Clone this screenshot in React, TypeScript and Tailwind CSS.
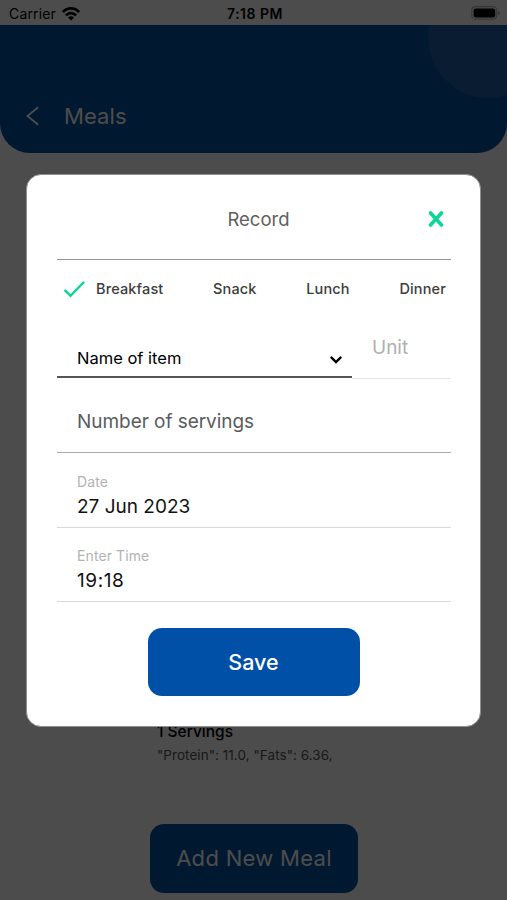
import type { ReactNode } from 'react';

const StatusBar = () => (
  <div className="grid h-[25px] grid-cols-3 items-center pt-[3px] pr-[6px] pl-[9px] text-[14px] leading-none text-black">
    <div className="flex items-center gap-[6px] tracking-[0.15px]">
      <span>Carrier</span>
      <svg className="mb-[1px]" width="18" height="14" viewBox="0 0 18 14" fill="none" stroke="currentColor" strokeWidth="2.8">
        <path d="M0.9 5.1 C5.4 0.2 12.6 0.2 17.1 5.1" />
        <path d="M3.9 8.4 C6.9 5.3 11.1 5.3 14.1 8.4" />
        <path d="M9 13.4 L6 10.5 C7.7 8.9 10.3 8.9 12 10.5 Z" fill="currentColor" stroke="none" />
      </svg>
    </div>
    <div className="text-center text-[14px] font-semibold tracking-[0.5px]">7:18 PM</div>
    <svg className="mb-[2px] justify-self-end" width="30" height="14" viewBox="0 0 30 14">
      <rect x="0.8" y="0.6" width="25" height="12.6" rx="3.6" fill="none" stroke="#000" strokeOpacity="0.3" strokeWidth="1.2" />
      <rect x="2.6" y="2.4" width="21.6" height="9" rx="2" />
      <path d="M27.3 5 C29.3 5.6 29.3 8.2 27.3 8.8 Z" opacity="0.45" />
    </svg>
  </div>
);

const Header = () => (
  <header className="relative flex h-[127.5px] items-end overflow-hidden rounded-b-[30px] bg-[#0050a0] pb-[23px] pl-[26px] text-white">
    <div className="absolute -top-[48px] left-[428px] h-[121px] w-[121px] rounded-full bg-[#ffd8c8]/12" />
    <svg className="mb-[4px]" width="13" height="20" viewBox="0 0 13 20" fill="none" stroke="currentColor" strokeWidth="1.9">
      <path d="M12.2 1.3 L1.4 10 L12.2 18.7" />
    </svg>
    <h1 className="ml-[25px] text-[22px] leading-[28px] tracking-[0.1px]">Meals</h1>
  </header>
);

const MealsPage = () => (
  <div className="flex h-[900px] flex-col bg-white">
    <StatusBar />
    <Header />
    <div className="mt-auto pl-[157px]">
      <p className="text-[15.5px] leading-[22px] font-medium text-black">1 Servings</p>
      <p className="mt-[2px] text-[13.5px] leading-[20px] tracking-[0.05px] text-[#555]">"Protein": 11.0, "Fats": 6.36,</p>
    </div>
    <button className="mt-[59px] mb-[7px] ml-[150px] h-[69px] w-[208px] rounded-[14px] bg-[#0050a0] text-[22px] tracking-[0.3px] text-white">
      Add New Meal
    </button>
  </div>
);

const Field = ({ label, children }: { label: string; children: ReactNode }) => (
  <div className="h-[74.5px] border-b border-[#d9d9d9] pt-[18.5px] pl-[20px]">
    <p className="text-[14px] leading-[20px] tracking-[0.1px] text-[#b3b3b3]">{label}</p>
    <p className="mt-[2px] text-[19px] leading-[26px] text-[#111]">{children}</p>
  </div>
);

const RecordDialog = () => (
  <div role="dialog" className="mt-[1px] flex h-[553px] w-[455px] flex-col rounded-[15px] border border-[#8e8e95] bg-white pr-[29px] pl-[30px]">
    <div className="relative flex h-[85px] shrink-0 items-center justify-center border-b border-[#929297] pl-[9px]">
      <h2 className="mt-[6px] text-[18.5px] text-[#606060]">Record</h2>
      <svg className="absolute top-[36px] right-[7px]" width="16" height="16" viewBox="0 0 16 16" fill="none" stroke="#0bd597" strokeWidth="3.6" strokeLinecap="round">
        <path d="M2.5 2 L13.5 14 M13.5 2 L2.5 14" />
      </svg>
    </div>

    <div className="flex h-[60px] shrink-0 items-center justify-between pr-[5px] pb-[2px] pl-[7px] text-[14.5px] font-medium tracking-[0.15px] text-[#3c3c3c]">
      <span className="flex items-center gap-[11px]">
        <svg width="21" height="17" viewBox="0 0 21 17" fill="none" stroke="#0bd597" strokeWidth="2.4" strokeLinecap="round">
          <path d="M1.3 9.7 L6.5 14.8 L19.5 1.5" />
        </svg>
        Breakfast
      </span>
      <span>Snack</span>
      <span>Lunch</span>
      <span>Dinner</span>
    </div>

    <div className="flex h-[59px] shrink-0 items-start">
      <div className="flex h-[58px] w-[295px] items-end justify-between border-b-2 border-[#555] pr-[10px] pb-[5px] pl-[20px]">
        <span className="text-[16.5px] leading-[26px] text-black">Name of item</span>
        <svg className="mb-[7px]" width="12" height="8" viewBox="0 0 12 8" fill="none" stroke="#000" strokeWidth="2.4" strokeLinecap="round">
          <path d="M1.5 1.6 L6 6 L10.5 1.6" />
        </svg>
      </div>
      <div className="h-[59px] flex-1 border-b border-[#e6e6e6] pt-[14px] pl-[20px] text-[19px] leading-[28px] text-[#b0b0b0]">Unit</div>
    </div>

    <div className="h-[74px] shrink-0 border-b border-[#ababab] pt-[29px] pl-[20px] text-[19px] leading-[28px] tracking-[-0.05px] text-[#5b5b5e]">
      Number of servings
    </div>
    <Field label="Date">27 Jun 2023</Field>
    <Field label="Enter Time"><span className="tracking-[0.6px]">19:18</span></Field>

    <button className="mt-[26px] mr-[1px] h-[68px] w-[212px] shrink-0 self-center rounded-[14px] bg-[#0050a8] pt-[1px] text-[21.5px] font-medium text-white">
      Save
    </button>
  </div>
);

export default function App() {
  return (
    <div className="relative h-[900px] w-[507px] overflow-hidden font-['Inter',sans-serif]">
      <MealsPage />
      <div className="absolute inset-0 flex items-center justify-center bg-black/70">
        <RecordDialog />
      </div>
    </div>
  );
}
